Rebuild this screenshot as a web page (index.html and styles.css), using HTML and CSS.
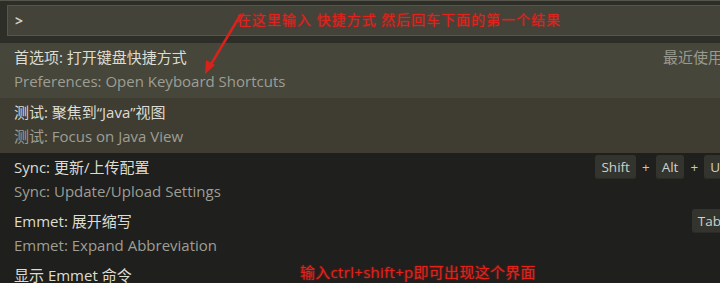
FILE: index.html
```html
<!DOCTYPE html>
<html lang="zh-CN">
<head>
  <meta charset="UTF-8">
  <title>Command Palette</title>
  <link rel="stylesheet" href="styles.css">
</head>
<body>
  <div class="palette">
    <div class="input-bar">
      <div class="input-box">&gt;</div>
    </div>
    <div class="results">
      <div class="row selected">
        <div class="labels">
          <div class="title">首选项: 打开键盘快捷方式</div>
          <div class="detail">Preferences: Open Keyboard Shortcuts</div>
        </div>
        <div class="meta">最近使用</div>
      </div>
      <div class="row recent">
        <div class="labels">
          <div class="title">测试: 聚焦到“Java”视图</div>
          <div class="detail">测试: Focus on Java View</div>
        </div>
      </div>
      <div class="row">
        <div class="labels">
          <div class="title">Sync: 更新/上传配置</div>
          <div class="detail">Sync: Update/Upload Settings</div>
        </div>
        <div class="keys">
          <span class="key">Shift</span><span class="plus">+</span><span class="key">Alt</span><span class="plus">+</span><span class="key">U</span>
        </div>
      </div>
      <div class="row">
        <div class="labels">
          <div class="title">Emmet: 展开缩写</div>
          <div class="detail">Emmet: Expand Abbreviation</div>
        </div>
        <div class="keys tab-key">
          <span class="key">Tab</span>
        </div>
      </div>
      <div class="row">
        <div class="labels">
          <div class="title">显示 Emmet 命令</div>
        </div>
      </div>
    </div>

    <!-- annotations drawn on top of the screenshot -->
    <div class="note note-top">在这里输入 快捷方式 然后回车下面的第一个结果</div>
    <div class="note note-bottom">输入ctrl+shift+p即可出现这个界面</div>
    <svg class="arrow" width="60" height="64" viewBox="0 0 60 64">
      <path d="M44 2 L13 54" stroke="#d8231c" stroke-width="2.5" fill="none"/>
      <path d="M8 62 L9 48 L18 53 Z" fill="#d8231c"/>
    </svg>
  </div>
</body>
</html>
```

FILE: styles.css
```css
body {
  margin: 0;
  background: #1f1f1d;
  font-family: 'Open Sans', 'Noto Sans CJK SC', sans-serif;
  overflow: hidden;
}
.palette {
  position: relative;
  width: 720px;
  height: 283px;
  overflow: hidden;
  background: #1f1f1d;
}
.input-bar {
  background: #2e2e29;
  padding: 4px 0 7px 7px;
  border-top: 1px solid #55554c;
}
.input-box {
  height: 29px;
  line-height: 29px;
  background: #43433a;
  border: 1px solid #56564c;
  border-right: none;
  padding-left: 7px;
  color: #cfcfc6;
  font-size: 14px;
  font-weight: bold;
}
.row {
  display: flex;
  justify-content: space-between;
  height: 54px;
  padding: 3px 0 0 14px;
  box-sizing: border-box;
}
.row.selected {
  background: #46463a;
  height: 55px;
}
.row.recent {
  background: #3f3d32;
  height: 55px;
}
.title {
  color: #dcdcd3;
  font-size: 15px;
  line-height: 23px;
  white-space: nowrap;
}
.detail {
  color: #9e9e95;
  font-size: 15px;
  line-height: 24px;
  white-space: nowrap;
}
.meta {
  color: #9a9a90;
  font-size: 15px;
  line-height: 23px;
  margin-right: -3px;
  white-space: nowrap;
}
.keys {
  display: flex;
  align-items: center;
  height: 24px;
  margin-top: -1px;
  margin-right: -6px;
  font-size: 13.5px;
  color: #d0d0c8;
}
.tab-key {
  margin-right: -7px;
}
.key {
  background: #34342f;
  border-radius: 3px;
  padding: 0 6px;
  line-height: 24px;
  box-shadow: inset 0 -1px 0 #2a2a26;
}
.plus {
  margin: 0 6px;
  color: #c8c8c0;
}
.note {
  position: absolute;
  color: #e0231b;
  white-space: nowrap;
  text-shadow: 0 0 2px rgba(230, 30, 25, 0.7);
}
.note-top {
  left: 237px;
  top: 9px;
  font-size: 14px;
  letter-spacing: 1px;
}
.note-bottom {
  left: 300px;
  top: 261px;
  font-size: 15px;
  letter-spacing: 0.3px;
}
.arrow {
  position: absolute;
  left: 197px;
  top: 12px;
}
```
